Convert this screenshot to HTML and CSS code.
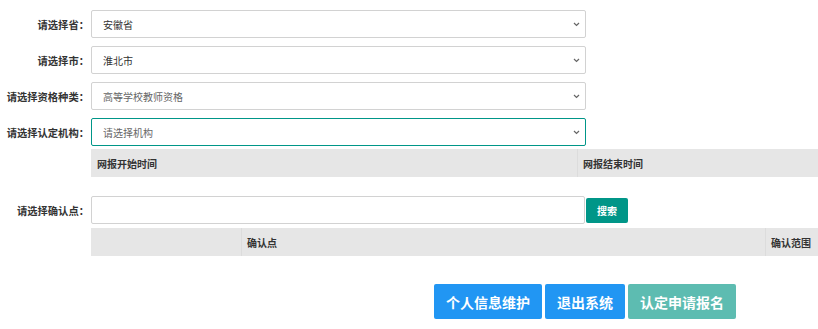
FILE: index.html
```html
<!DOCTYPE html>
<html lang="zh-CN">
<head>
  <meta charset="UTF-8" />
  <meta name="viewport" content="width=device-width, initial-scale=1.0"/>
  <title>认定申请</title>
  <link rel="stylesheet" href="styles.css">
</head>
<body>
  <div class="form-box">
    <div class="form-row">
      <label class="form-label">请选择省：</label>
      <div class="select-wrap">
        <select class="form-select">
          <option>安徽省</option>
        </select>
        <svg class="select-arrow" width="7" height="5" viewBox="0 0 7 5"><path d="M1 1l2.5 2.5L6 1" fill="none" stroke="#666" stroke-width="1.2"/></svg>
      </div>
    </div>
    <div class="form-row">
      <label class="form-label">请选择市：</label>
      <div class="select-wrap">
        <select class="form-select">
          <option>淮北市</option>
        </select>
        <svg class="select-arrow" width="7" height="5" viewBox="0 0 7 5"><path d="M1 1l2.5 2.5L6 1" fill="none" stroke="#666" stroke-width="1.2"/></svg>
      </div>
    </div>
    <div class="form-row">
      <label class="form-label">请选择资格种类：</label>
      <div class="select-wrap">
        <select class="form-select muted">
          <option>高等学校教师资格</option>
        </select>
        <svg class="select-arrow" width="7" height="5" viewBox="0 0 7 5"><path d="M1 1l2.5 2.5L6 1" fill="none" stroke="#666" stroke-width="1.2"/></svg>
      </div>
    </div>
    <div class="form-row">
      <label class="form-label">请选择认定机构：</label>
      <div class="select-wrap">
        <select class="form-select muted active">
          <option>请选择机构</option>
        </select>
        <svg class="select-arrow" width="7" height="5" viewBox="0 0 7 5"><path d="M1 1l2.5 2.5L6 1" fill="none" stroke="#666" stroke-width="1.2"/></svg>
      </div>
    </div>

    <table class="info-table time-table">
      <tr>
        <th class="col-start">网报开始时间</th>
        <th>网报结束时间</th>
      </tr>
    </table>

    <div class="form-row search-row">
      <label class="form-label">请选择确认点：</label>
      <input type="text" class="form-input" />
      <button class="search-btn">搜索</button>
    </div>

    <table class="info-table point-table">
      <tr>
        <th class="col-blank"></th>
        <th class="col-point">确认点</th>
        <th>确认范围</th>
      </tr>
    </table>

    <div class="actions">
      <button class="btn btn-blue">个人信息维护</button>
      <button class="btn btn-blue">退出系统</button>
      <button class="btn btn-teal">认定申请报名</button>
    </div>
  </div>
</body>
</html>
```

FILE: styles.css
```css
body {
  margin: 0;
  padding: 0;
  background-color: #fff;
  font-family: "Noto Sans CJK SC", "Microsoft YaHei", sans-serif;
  font-size: 10px;
  color: #333;
  overflow: hidden;
}
.form-box {
  padding-top: 10px;
}
.form-row {
  display: flex;
  align-items: center;
  height: 28px;
  margin-bottom: 8px;
}
.form-label {
  width: 89px;
  margin-right: 2px;
  text-align: right;
  font-size: 10.3px;
  font-weight: bold;
  color: #333;
  white-space: nowrap;
}
.select-wrap {
  position: relative;
  height: 28px;
}
.select-arrow {
  position: absolute;
  right: 6px;
  top: 12px;
  pointer-events: none;
}
.form-select,
.form-input {
  box-sizing: border-box;
  width: 495px;
  height: 28px;
  padding: 0 11px;
  border: 1px solid #d2d2d2;
  border-radius: 2px;
  background-color: #fff;
  font-family: inherit;
  font-size: 10px;
  color: #333;
  outline: none;
  appearance: none;
  -webkit-appearance: none;
}
.form-select.muted {
  color: #666;
}
.form-select.active {
  border-color: #009688;
}
.form-input {
  width: 494px;
}
.info-table {
  border-collapse: collapse;
  margin-left: 91px;
  width: 760px;
  background-color: #e6e6e6;
}
.info-table th {
  height: 28px;
  padding: 0 5px;
  text-align: left;
  font-weight: bold;
  white-space: nowrap;
  border: none;
}
.info-table th + th {
  border-left: 1px solid #dcdcdc;
}
.time-table {
  margin-top: -5px;
  margin-bottom: 19px;
}
.time-table .col-start {
  width: 475px;
  padding-left: 6px;
}
.search-row {
  margin-bottom: 4px;
}
.search-btn {
  height: 25px;
  margin-left: 1px;
  padding: 0 11px;
  border: none;
  border-radius: 2px;
  background-color: #009688;
  color: #fff;
  font-family: inherit;
  font-size: 10px;
  font-weight: bold;
  cursor: pointer;
}
.point-table .col-blank {
  width: 140px;
}
.point-table .col-point {
  width: 513px;
}
.actions {
  display: flex;
  gap: 3px;
  margin-top: 28px;
  padding-left: 434px;
}
.btn {
  height: 35px;
  padding: 0 12px;
  border: none;
  border-radius: 2px;
  color: #fff;
  font-family: inherit;
  font-size: 14px;
  font-weight: bold;
  cursor: pointer;
}
.btn-blue {
  background-color: #2196f3;
}
.btn-teal {
  background-color: #5dbcb1;
}
```
